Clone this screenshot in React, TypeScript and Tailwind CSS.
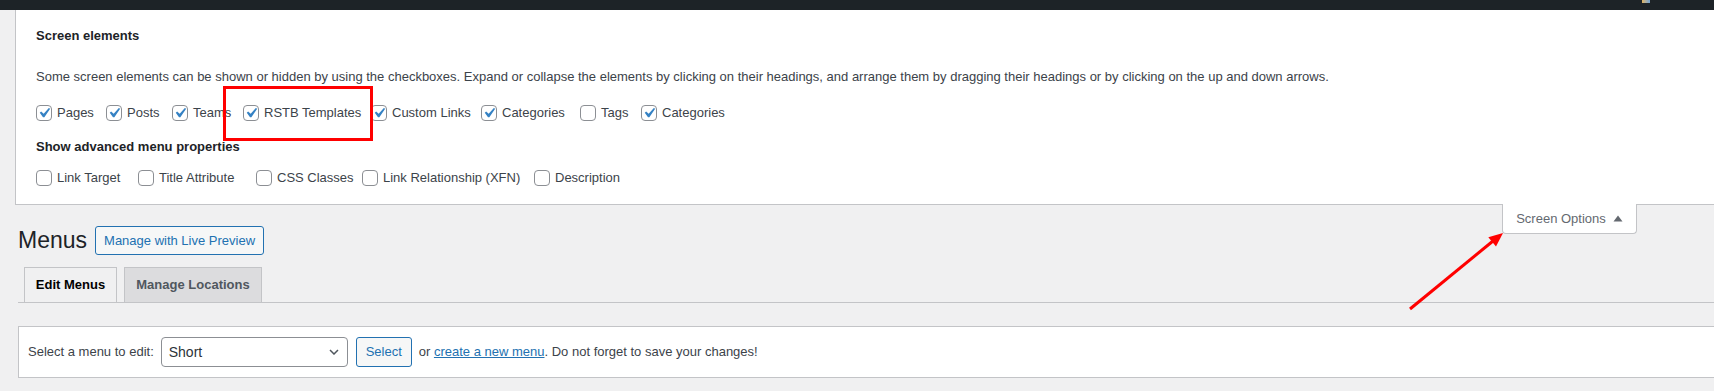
import React from 'react';

type Item = { label: string; checked: boolean; w: string };

const screenElements: Item[] = [
  { label: 'Pages', checked: true, w: 'w-[70px]' },
  { label: 'Posts', checked: true, w: 'w-[66px]' },
  { label: 'Teams', checked: true, w: 'w-[71px]' },
  { label: 'RSTB Templates', checked: true, w: 'w-[128px]' },
  { label: 'Custom Links', checked: true, w: 'w-[110px]' },
  { label: 'Categories', checked: true, w: 'w-[99px]' },
  { label: 'Tags', checked: false, w: 'w-[61px]' },
  { label: 'Categories', checked: true, w: '' },
];

const advanced: Item[] = [
  { label: 'Link Target', checked: false, w: 'w-[102px]' },
  { label: 'Title Attribute', checked: false, w: 'w-[118px]' },
  { label: 'CSS Classes', checked: false, w: 'w-[106px]' },
  { label: 'Link Relationship (XFN)', checked: false, w: 'w-[172px]' },
  { label: 'Description', checked: false, w: '' },
];

const Checkbox = ({ checked }: { checked: boolean }) => (
  <span className="flex h-4 w-4 shrink-0 items-center justify-center overflow-visible rounded-[4px] border border-[#8c8f94] bg-white">
    {checked && (
      <svg viewBox="0 0 20 20" className="h-5 w-5 shrink-0 -ml-px -mt-px">
        <path d="M14.83 4.89l1.34.94-5.81 8.38H9.02L5.78 9.67l1.34-1.25 2.57 2.4z" fill="#3582c4" />
      </svg>
    )}
  </span>
);

const CheckRow = ({ items }: { items: Item[] }) => (
  <div className="flex h-5 items-center">
    {items.map((item, i) => (
      <label key={i} className={`flex shrink-0 items-center gap-[5px] text-[13px] text-[#3c434a] ${item.w}`}>
        <Checkbox checked={item.checked} />
        <span className="whitespace-nowrap">{item.label}</span>
      </label>
    ))}
  </div>
);

export default function App() {
  return (
    <div className="relative min-h-[391px] w-[1714px] overflow-hidden bg-[#f0f0f1] font-['Liberation_Sans',Arial,sans-serif] leading-5 text-[#3c434a]">
      {/* admin bar */}
      <div className="flex h-[10px] items-start justify-end bg-[#1d2327] pr-[64px]">
        <span className="h-[3px] w-[8px] bg-gradient-to-r from-[#e0b25c] to-[#6fa3d6]" />
      </div>

      {/* Screen options panel */}
      <div className="ml-[15px] border-b border-l border-[#c3c4c7] bg-white pb-[16px] pl-5 pt-[16px]">
        <h5 className="text-[13px] font-semibold text-[#1d2327]">Screen elements</h5>
        <p className="mt-[21px] text-[13px]">
          Some screen elements can be shown or hidden by using the checkboxes. Expand or collapse the elements by clicking on their headings, and arrange them by dragging their headings or by clicking on the up and down arrows.
        </p>
        <div className="mt-4">
          <CheckRow items={screenElements} />
        </div>
        <h5 className="mt-[14px] text-[13px] font-semibold text-[#1d2327]">Show advanced menu properties</h5>
        <div className="mt-[11px]">
          <CheckRow items={advanced} />
        </div>
      </div>

      <div className="pl-[18px]">
        {/* Screen Options toggle */}
        <button className="float-right -mt-px mr-[77px] flex h-[30px] w-[135px] items-center justify-center gap-[7px] rounded-b-[4px] border border-t-0 border-[#c3c4c7] bg-white text-[13px] text-[#646970]">
          Screen Options
          <svg viewBox="0 0 10 7" className="h-[7px] w-[10px]">
            <path d="M5 0.5L9.5 6.5H0.5z" fill="#646970" />
          </svg>
        </button>

        <div className="flex items-center gap-[8px] pt-[21px]">
          <h1 className="text-[23px] leading-[29px] text-[#1d2327]">Menus</h1>
          <a className="flex h-[29px] items-center rounded-[3px] border border-[#2271b1] bg-[#f6f7f7] px-[8px] text-[13px] text-[#2271b1]">
            Manage with Live Preview
          </a>
        </div>

        {/* Tabs */}
        <nav className="mt-[12px] flex border-b border-[#c3c4c7]">
          <a className="ml-[6px] w-[93px] border border-b-0 border-[#c3c4c7] bg-[#f0f0f1] py-[5px] text-center text-[13px] font-bold leading-6 text-[#000]">
            Edit Menus
          </a>
          <a className="ml-[7px] w-[138px] border border-b-0 border-[#c3c4c7] bg-[#dcdcde] py-[5px] text-center text-[13px] font-bold leading-6 text-[#50575e]">
            Manage Locations
          </a>
        </nav>

        {/* Select menu */}
        <div className="mt-[23px] flex items-center border-y border-l border-[#c3c4c7] bg-white py-[10px] pl-[9px] text-[13px]">
          <span>Select a menu to edit:</span>
          <div className="ml-[7px] flex h-[30px] w-[187px] items-center justify-between rounded-[4px] border border-[#8c8f94] bg-white pl-[7px] pr-[8px] text-[14px] text-[#2c3338]">
            <span>Short</span>
            <svg viewBox="0 0 10 6" className="h-[6px] w-[10px]">
              <path d="M1 1l4 4 4-4" fill="none" stroke="#50575e" strokeWidth="1.5" />
            </svg>
          </div>
          <button className="ml-[8px] h-[30px] w-[56px] rounded-[3px] border border-[#2271b1] bg-[#f6f7f7] text-[13px] text-[#2271b1]">
            Select
          </button>
          <span className="ml-[7px]">
            or <a className="text-[#2271b1] underline">create a new menu</a>. Do not forget to save your changes!
          </span>
        </div>
      </div>

      {/* annotations */}
      <div className="absolute left-[223px] top-[86px] h-[55px] w-[150px] border-[3px] border-[#ff0000]" />
      <svg className="absolute left-[1400px] top-[225px] h-[90px] w-[110px]" viewBox="0 0 110 90">
        <line x1="10" y1="84" x2="93" y2="16" stroke="#ff0000" strokeWidth="3" />
        <path d="M103 8L96 21.5L88.3 12.2z" fill="#ff0000" />
      </svg>
    </div>
  );
}
